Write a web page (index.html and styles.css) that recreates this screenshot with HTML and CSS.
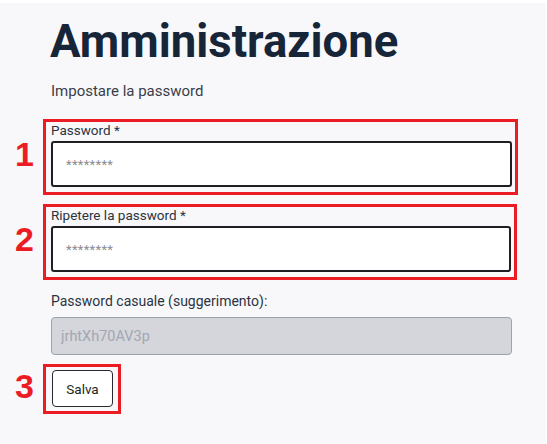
FILE: index.html
```html
<!DOCTYPE html>
<html lang="it">
<head>
<meta charset="utf-8">
<title>Amministrazione</title>
<link rel="stylesheet" href="styles.css">
</head>
<body>
<main class="page">
  <h1 class="title">Amministrazione</h1>
  <p class="subtitle">Impostare la password</p>

  <div class="row row-1">
    <span class="mark">1</span>
    <div class="field boxed">
      <label class="label" for="pw1">Password *</label>
      <input class="input" id="pw1" type="text" placeholder="********">
    </div>
  </div>

  <div class="row row-2">
    <span class="mark">2</span>
    <div class="field boxed">
      <label class="label" for="pw2">Ripetere la password *</label>
      <input class="input" id="pw2" type="text" placeholder="********">
    </div>
  </div>

  <div class="row row-plain">
    <span class="mark"></span>
    <div class="field plain">
      <label class="label label-plain" for="pw3">Password casuale (suggerimento):</label>
      <input class="input input-disabled" id="pw3" type="text" value="jrhtXh70AV3p" disabled>
    </div>
  </div>

  <div class="row row-3">
    <span class="mark">3</span>
    <div class="btnbox">
      <button class="btn" type="button">Salva</button>
    </div>
  </div>
</main>
</body>
</html>
```
FILE: styles.css
```css
html, body {
  margin: 0;
  padding: 0;
  background: #ffffff;
}

body {
  font-family: Roboto, "Noto Sans", sans-serif;
  color: #2b3340;
}

.page {
  margin-top: 3px;
  margin-right: 1px;
  min-height: 441px;
  background: #f8f8fb;
  padding-top: 1px;
  box-sizing: border-box;
}

.title {
  margin: 10px 0 0 50px;
  font-size: 45.5px;
  line-height: 56px;
  font-weight: 700;
  color: #172538;
  letter-spacing: 0;
}

.subtitle {
  margin: 12px 0 0 51px;
  font-size: 15px;
  line-height: 18px;
  font-weight: 400;
  color: #383e48;
}

.row {
  display: flex;
  align-items: center;
}

.row-1 { margin-top: 19px; }
.row-2 { margin-top: 9px; }
.row-plain { margin-top: 12px; }
.row-3 { margin-top: 9px; }

.mark {
  width: 43px;
  flex: none;
  box-sizing: border-box;
  padding-right: 9px;
  padding-bottom: 6px;
  text-align: right;
  font-family: "Liberation Sans", Arial, sans-serif;
  font-weight: 700;
  font-size: 34px;
  color: #ec1c24;
}

.field {
  display: flex;
  flex-direction: column;
}

.boxed {
  width: 475px;
  box-sizing: border-box;
  border: 3px solid #ec1c24;
  padding: 0 3px 5px 5px;
}

.row-2 .boxed {
  width: 474px;
}

.plain {
  width: 469px;
  box-sizing: border-box;
  padding-left: 8px;
}

.label {
  font-size: 13.5px;
  line-height: 16px;
  color: #2b3340;
  margin-bottom: 3px;
}

.label-plain {
  font-size: 14px;
  line-height: 18px;
  margin-bottom: 7px;
}

.input {
  height: 46px;
  box-sizing: border-box;
  border: 2px solid #1e1f22;
  border-radius: 3px;
  background: #ffffff;
  padding: 0 13px;
  font-family: Roboto, "Noto Sans", sans-serif;
  font-size: 13px;
  color: #333;
  outline: none;
}

.input::placeholder {
  color: #8b8d92;
  letter-spacing: 0.3px;
}

.input-disabled {
  height: 38px;
  border: 1px solid #9da2b0;
  border-radius: 4px;
  background: #d5d6db;
  color: #a2a6b2;
  padding: 0 9px;
  font-size: 14.5px;
}

.btnbox {
  box-sizing: border-box;
  border: 3px solid #ec1c24;
  padding: 3px 5px 4px 6px;
}

.btn {
  display: block;
  width: 61px;
  height: 37px;
  box-sizing: border-box;
  border: 1px solid #2a2a2e;
  border-radius: 4px;
  background: #ffffff;
  font-family: Roboto, "Noto Sans", sans-serif;
  font-size: 13.5px;
  color: #1e1f22;
  padding: 0;
}
```
